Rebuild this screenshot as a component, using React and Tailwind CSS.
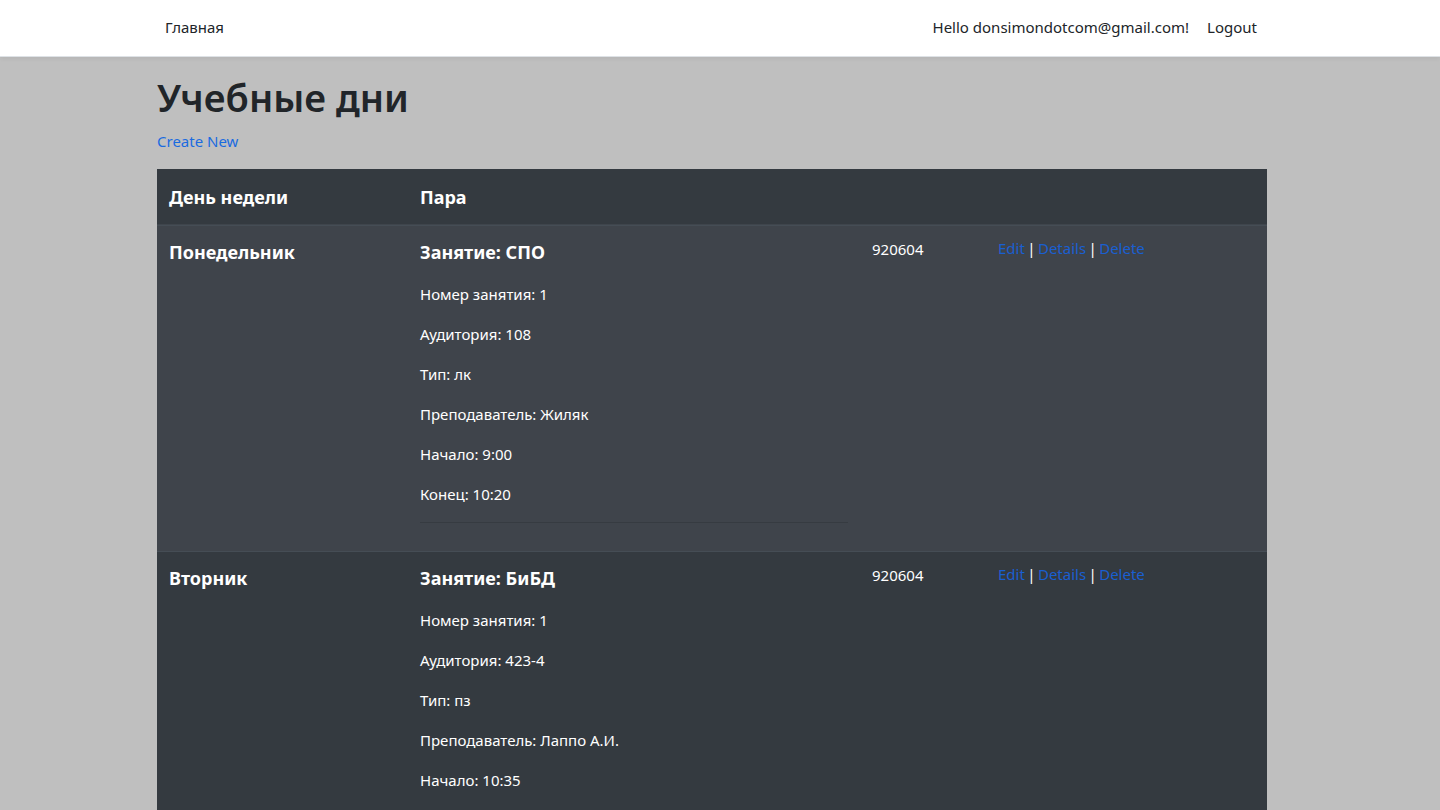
import React from "react";

const days = [
  {
    day: "Понедельник",
    subject: "СПО",
    number: "1",
    room: "108",
    type: "лк",
    teacher: "Жиляк",
    start: "9:00",
    end: "10:20",
    group: "920604",
  },
  {
    day: "Вторник",
    subject: "БиБД",
    number: "1",
    room: "423-4",
    type: "пз",
    teacher: "Лаппо А.И.",
    start: "10:35",
    end: "11:55",
    group: "920604",
  },
];

const Row = ({ item, striped }) => (
  <div
    className={`flex border-t border-[#454d55] ${
      striped ? "bg-[#3f444b]" : "bg-[#343a40]"
    }`}
  >
    <div className="w-[251px] px-3 pt-[13px] text-[18px] font-bold leading-[27px]">{item.day}</div>
    <div className="w-[452px] px-3 pt-[13px] pb-3">
      <div className="text-[18px] font-bold leading-[27px] mb-[16px]">Занятие: {item.subject}</div>
      <p className="mb-4">Номер занятия: {item.number}</p>
      <p className="mb-4">Аудитория: {item.room}</p>
      <p className="mb-4">Тип: {item.type}</p>
      <p className="mb-4">Преподаватель: {item.teacher}</p>
      <p className="mb-4">Начало: {item.start}</p>
      <p className="mb-4">Конец: {item.end}</p>
      <hr className="border-0 border-t border-[#363b41] mb-4" />
    </div>
    <div className="w-[126px] px-3 pt-[11px] leading-6">{item.group}</div>
    <div className="flex-1 px-3 pt-[10px] leading-6 [word-spacing:-1.5px]">
      <a className="text-[#1a5fd1]">Edit</a> |{" "}
      <a className="text-[#1a5fd1]">Details</a> |{" "}
      <a className="text-[#1a5fd1]">Delete</a>
    </div>
  </div>
);

export default function App() {
  return (
    <div
      className="min-h-[810px] bg-[#bfbfbf] text-[#212529]"
      style={{ fontFamily: '"Noto Sans", "Open Sans", sans-serif' }}
    >
      <header className="bg-white border-b border-[#dee2e6] shadow-[0_2px_4px_rgba(0,0,0,0.05)] pr-4">
        <div className="w-[1110px] mx-auto flex items-center justify-between h-14 pb-[2px] text-[15px]">
          <a className="ml-2 text-[#212529]">Главная</a>
          <div className="flex items-center gap-[18px] mr-[10px]">
            <span>Hello donsimondotcom@gmail.com!</span>
            <a>Logout</a>
          </div>
        </div>
      </header>
      <main className="pr-4">
        <div className="w-[1110px] mx-auto pt-4">
          <h1 className="text-[38px] font-semibold leading-[48px] mb-2">Учебные дни</h1>
          <p className="mb-4 leading-6 text-[15px]">
            <a className="text-[#1a6be0]">Create New</a>
          </p>
          <div className="bg-[#343a40] text-white text-[15px] leading-6">
            <div className="flex border-b border-[#3f454c] text-[18px] font-bold">
              <div className="w-[251px] px-3 pt-[15px] pb-[13px] leading-[27px]">День недели</div>
              <div className="w-[452px] px-3 pt-[15px] pb-[13px] leading-[27px]">Пара</div>
              <div className="w-[126px]" />
              <div className="flex-1" />
            </div>
            {days.map((d, i) => (
              <Row key={d.day} item={d} striped={i % 2 === 0} />
            ))}
          </div>
        </div>
      </main>
    </div>
  );
}
